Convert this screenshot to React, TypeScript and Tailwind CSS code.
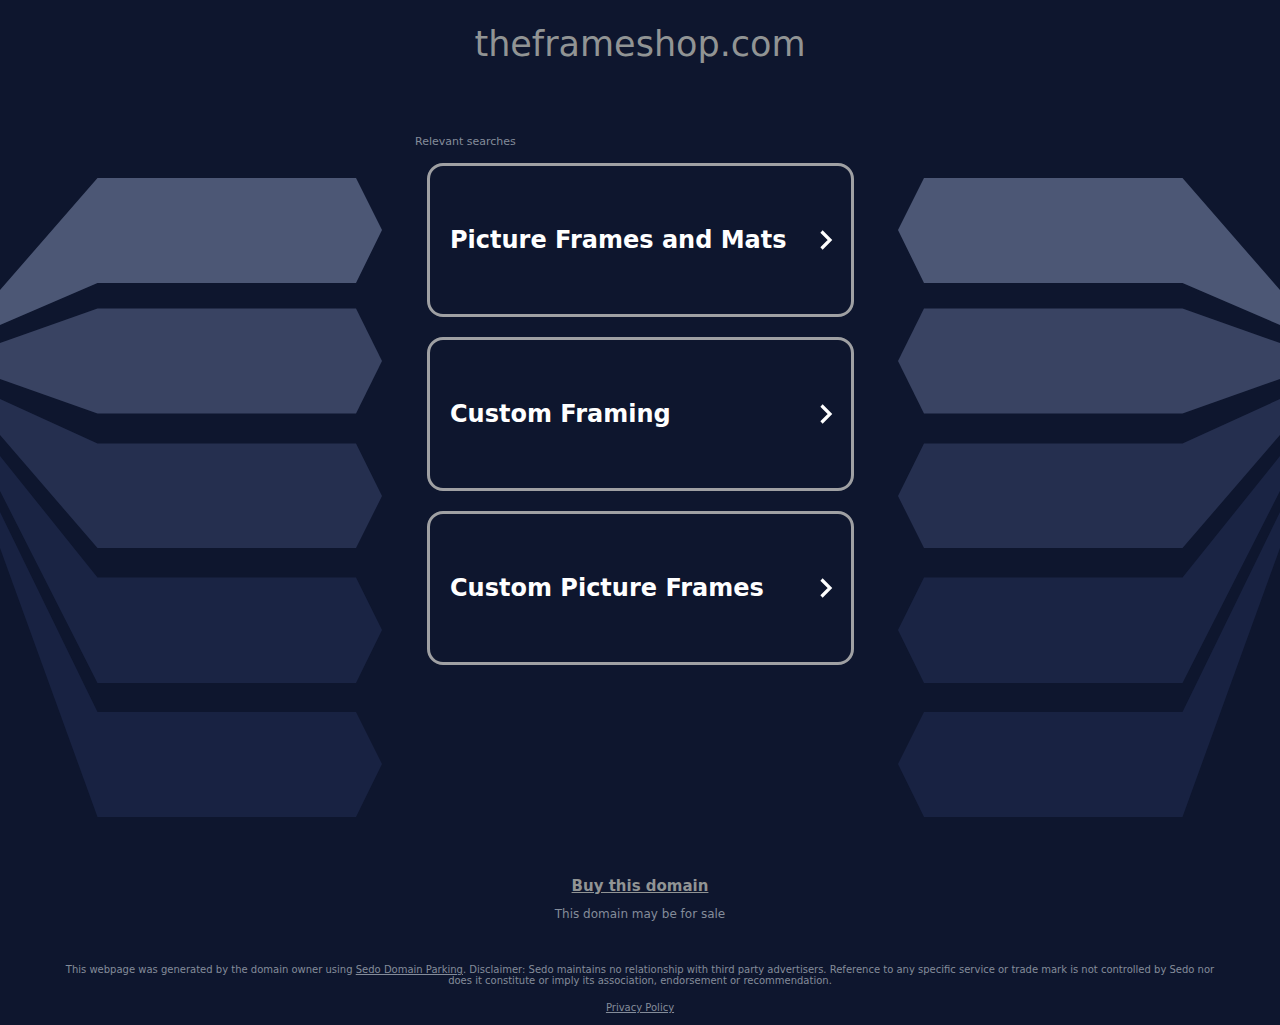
import React from 'react';

const searches = ['Picture Frames and Mats', 'Custom Framing', 'Custom Picture Frames'];

const ribbons = [
    { fill: '#4c5775', points: '0,112 97.5,0 356,0 382,52 356,105 97.5,105 0,147' },
    { fill: '#394362', points: '0,165 97.5,130.5 356,130.5 382,183 356,235.5 97.5,235.5 0,201' },
    { fill: '#252f4f', points: '0,221 97.5,265.5 356,265.5 382,318 356,370 97.5,370 0,257' },
    { fill: '#1a2444', points: '0,278 97.5,399.5 356,399.5 382,452 356,505 97.5,505 0,313' },
    { fill: '#182242', points: '0,334 97.5,534 356,534 382,586 356,639 97.5,639 0,370' },
];

const Ribbons: React.FC<{ className?: string }> = ({ className }) => (
    <svg viewBox="0 0 382 640" className={className} aria-hidden="true">
        {ribbons.map((ribbon) => (
            <polygon key={ribbon.points} points={ribbon.points} fill={ribbon.fill} />
        ))}
    </svg>
);

const Chevron: React.FC = () => (
    <svg viewBox="0 0 14 22" className="h-[22px] w-[14px] shrink-0" fill="none" aria-hidden="true">
        <path d="M2.5 2.5 L11 11 L2.5 19.5" stroke="#ffffff" strokeWidth="3.2" />
    </svg>
);

const App: React.FC = () => {
    return (
        <div className="min-h-screen bg-[#0e162e] font-['DejaVu_Sans',sans-serif] text-[#848c9a]">
            <header className="pt-6 text-center">
                <h1 className="text-[35px] leading-10 text-[#919494]">theframeshop.com</h1>
            </header>

            {/* Resultados com as fitas dos dois lados */}
            <main className="grid grid-cols-[1fr_516px_1fr] items-start pt-[70px]">
                <Ribbons className="mt-11 w-full" />

                <section className="mx-auto w-[450px]">
                    <h2 className="text-[11px] leading-4">Relevant searches</h2>
                    <ul className="mt-[13px] mr-[11px] ml-3 space-y-5">
                        {searches.map((search) => (
                            <li key={search}>
                                <a
                                    href="#"
                                    className="flex h-[154px] items-center justify-between rounded-2xl border-3 border-[#9fa0a3] pr-[18px] pl-5 text-2xl font-bold text-white"
                                >
                                    {search}
                                    <Chevron />
                                </a>
                            </li>
                        ))}
                    </ul>
                </section>

                <Ribbons className="mt-11 w-full -scale-x-100" />
            </main>

            <section className="pt-[58px] text-center">
                <a href="#" className="block text-[15px] leading-5 font-bold text-[#919494] underline">
                    Buy this domain
                </a>
                <p className="mt-2.5 text-xs">This domain may be for sale</p>
            </section>

            <footer className="px-16 pt-[42px] text-center text-[10px] leading-[11px]">
                <p>
                    This webpage was generated by the domain owner using{' '}
                    <a href="#" className="underline">Sedo Domain Parking</a>. Disclaimer: Sedo maintains no
                    relationship with third party advertisers. Reference to any specific service or trade mark is not
                    controlled by Sedo nor does it constitute or imply its association, endorsement or recommendation.
                </p>
                <a href="#" className="mt-4 inline-block underline">Privacy Policy</a>
            </footer>
        </div>
    );
};

export default App;
